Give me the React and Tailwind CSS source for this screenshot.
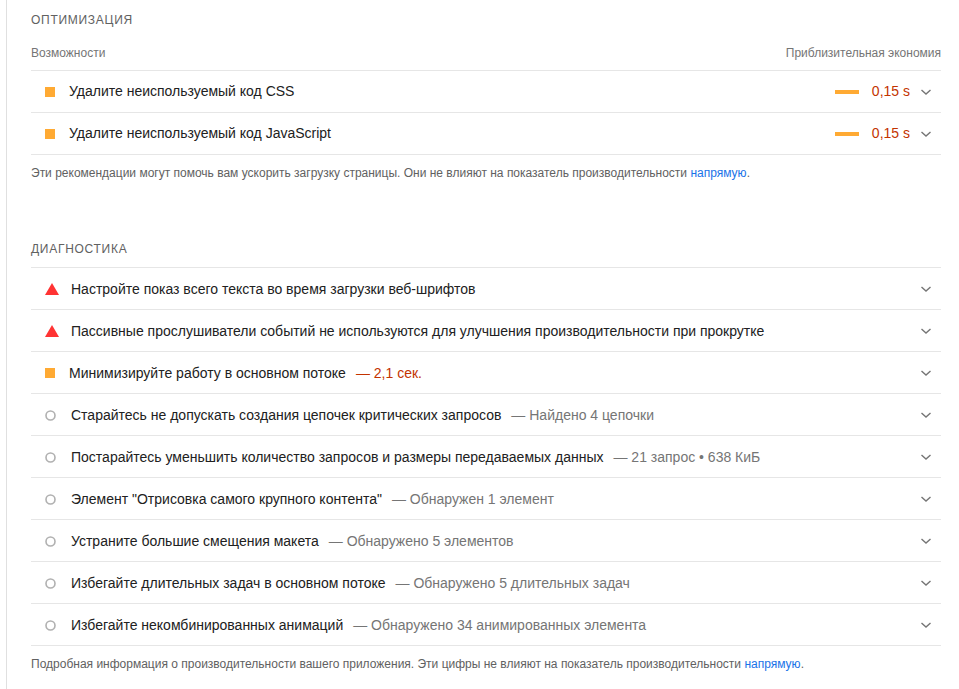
import React from 'react';

const opportunities = [
  { title: 'Удалите неиспользуемый код CSS', saving: '0,15 s' },
  { title: 'Удалите неиспользуемый код JavaScript', saving: '0,15 s' },
];

const diagnostics = [
  { type: 'fail', title: 'Настройте показ всего текста во время загрузки веб-шрифтов' },
  { type: 'fail', title: 'Пассивные прослушиватели событий не используются для улучшения производительности при прокрутке' },
  { type: 'average', title: 'Минимизируйте работу в основном потоке', detail: '— 2,1 сек.', warn: true },
  { type: 'info', title: 'Старайтесь не допускать создания цепочек критических запросов', detail: '— Найдено 4 цепочки' },
  { type: 'info', title: 'Постарайтесь уменьшить количество запросов и размеры передаваемых данных', detail: '— 21 запрос • 638 КиБ' },
  { type: 'info', title: 'Элемент "Отрисовка самого крупного контента"', detail: '— Обнаружен 1 элемент' },
  { type: 'info', title: 'Устраните большие смещения макета', detail: '— Обнаружено 5 элементов' },
  { type: 'info', title: 'Избегайте длительных задач в основном потоке', detail: '— Обнаружено 5 длительных задач' },
  { type: 'info', title: 'Избегайте некомбинированных анимаций', detail: '— Обнаружено 34 анимированных элемента' },
];

function Chevron() {
  return (
    <svg width="12" height="8" viewBox="0 0 12 8" className="shrink-0">
      <path d="M1.5 2 L6 6 L10.5 2" fill="none" stroke="#757575" strokeWidth="1.4" />
    </svg>
  );
}

function StatusIcon({ type }) {
  if (type === 'fail') {
    return (
      <svg width="14" height="12" viewBox="0 0 14 12" className="shrink-0">
        <polygon points="7,0 14,12 0,12" fill="#ff3333" />
      </svg>
    );
  }
  if (type === 'average') {
    return <div className="w-[10px] h-[10px] bg-[#ffaa33] shrink-0" />;
  }
  return (
    <svg width="11" height="11" viewBox="0 0 11 11" className="shrink-0">
      <circle cx="5.5" cy="5.5" r="4.5" fill="none" stroke="#b0b0b0" strokeWidth="1.6" />
    </svg>
  );
}

export default function App() {
  return (
    <div
      className="w-[959px] h-[689px] bg-white overflow-hidden"
      style={{ fontFamily: '"Liberation Sans", Arial, sans-serif' }}
    >
      <div className="ml-[6px] border-l border-[#e0e0e0] pl-[24px] pr-[18px] h-full">
        {/* Optimization */}
        <div className="pt-[13px] text-[12px] leading-[14px] tracking-[0.06em] text-[#616161]">ОПТИМИЗАЦИЯ</div>
        <div className="mt-[19px] flex justify-between text-[12px] leading-[14px] text-[#757575] pb-[10px] border-b border-[#e6e6e6]">
          <span>Возможности</span>
          <span>Приблизительная экономия</span>
        </div>
        {opportunities.map((o) => (
          <div key={o.title} className="h-[42px] flex items-center border-b border-[#e6e6e6] pl-[14px] pr-[9px]">
            <div className="w-[10px] h-[10px] bg-[#ffaa33] shrink-0" />
            <span className="ml-[14px] text-[14px] text-[#212121] flex-1">{o.title}</span>
            <div className="w-[24px] h-[4px] bg-[#ffaa33]" />
            <span className="ml-[13px] text-[14px] text-[#c33300]">{o.saving}</span>
            <div className="ml-[10px]"><Chevron /></div>
          </div>
        ))}
        <p className="mt-[11px] text-[12px] leading-[14px] text-[#616161]">
          Эти рекомендации могут помочь вам ускорить загрузку страницы. Они не влияют на показатель производительности{' '}
          <a className="text-[#1a73e8]">напрямую</a>.
        </p>

        {/* Diagnostics */}
        <div className="mt-[62px] text-[12px] leading-[14px] tracking-[0.06em] text-[#616161] pb-[11px] border-b border-[#e6e6e6]">ДИАГНОСТИКА</div>
        {diagnostics.map((d) => (
          <div key={d.title} className="h-[42px] flex items-center border-b border-[#e6e6e6] pl-[14px] pr-[9px] pt-[1px]">
            <StatusIcon type={d.type} />
            <span className={`${d.type === 'average' ? 'ml-[14px]' : d.type === 'info' ? 'ml-[15px]' : 'ml-[12px]'} text-[14px] text-[#212121]`}>{d.title}</span>
            {d.detail && (
              <span className={`ml-[10px] text-[14px] ${d.warn ? 'text-[#c33300]' : 'text-[#757575]'}`}>{d.detail}</span>
            )}
            <div className="flex-1" />
            <Chevron />
          </div>
        ))}
        <p className="mt-[11px] text-[12px] leading-[14px] text-[#616161]">
          Подробная информация о производительности вашего приложения. Эти цифры не влияют на показатель производительности{' '}
          <a className="text-[#1a73e8]">напрямую</a>.
        </p>
      </div>
    </div>
  );
}
